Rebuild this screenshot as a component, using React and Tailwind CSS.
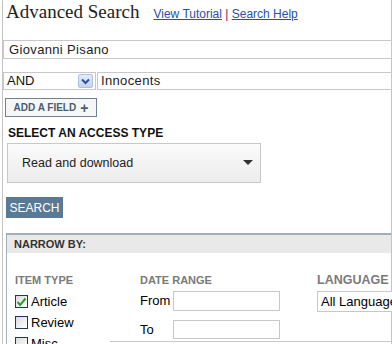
import React from 'react';

const ChevronDown = () => (
  <svg width="9" height="7" viewBox="0 0 9 7">
    <path d="M1 1.5 L4.5 5 L8 1.5" fill="none" stroke="#2b4f9c" strokeWidth="2" />
  </svg>
);

const Caret = () => (
  <svg width="10" height="6" viewBox="0 0 10 6">
    <path d="M0 0 H10 L5 5 Z" fill="#333" />
  </svg>
);

const Check = () => (
  <svg width="11" height="10" viewBox="0 0 11 10">
    <path d="M1.5 5 L4.2 8 L9.5 1.5" fill="none" stroke="#2aa02a" strokeWidth="2" />
  </svg>
);

const CheckBox = ({ checked, label }) => (
  <div className="flex items-center h-[21px]">
    <div className="w-[13px] h-[13px] shrink-0 border border-[#1c3a5a] bg-gradient-to-br from-[#dcdcdc] to-white flex items-center justify-center">
      {checked && <Check />}
    </div>
    <span className="ml-[3px] text-[13px] text-black leading-none">{label}</span>
  </div>
);

const App = () => {
  return (
    <div className="w-[392px] h-[344px] overflow-hidden bg-white font-['Liberation_Sans',Arial,sans-serif]">
      <div className="ml-[2px] w-[390px] h-[344px] border-x border-[#c4c4c4]">
        {/* header */}
        <div className="h-[40px] flex items-baseline pl-[3px] pt-[2px]">
          <h1 className="font-['Liberation_Serif','Times_New_Roman',serif] text-[19px] text-[#222] leading-[19px]">
            Advanced Search
          </h1>
          <div className="ml-[14px] text-[12px] leading-none">
            <a href="#" className="text-[#2b4fa0] underline">View Tutorial</a>
            <span className="text-[#6a2a5a]"> | </span>
            <a href="#" className="text-[#2b4fa0] underline">Search Help</a>
          </div>
        </div>

        {/* first term */}
        <div className="w-[389px] h-[19px] border border-[#c8c8c8] flex items-center pl-[5px] text-[13px] tracking-[0.35px] text-[#222]">
          Giovanni Pisano
        </div>

        {/* second term */}
        <div className="mt-[13px] flex w-[389px] h-[18px]">
          <div className="w-[93px] h-[18px] border border-[#c8c8c8] flex items-center justify-between pl-[3px] pr-[2px] text-[13px] text-[#111]">
            <span>AND</span>
            <div className="w-[15px] h-[14px] rounded-[2px] border border-[#aac0e4] bg-gradient-to-b from-[#e4ecfa] to-[#c4d4f0] flex items-center justify-center">
              <ChevronDown />
            </div>
          </div>
          <div className="ml-[1px] flex-1 h-[18px] border border-[#c8c8c8] flex items-center pl-[3px] text-[13px] tracking-[0.35px] text-[#222]">
            Innocents
          </div>
        </div>

        {/* add a field */}
        <button className="mt-[8px] ml-[2px] w-[92px] h-[19px] border border-[#6f8294] bg-[#f4f6f8] flex items-center justify-center gap-[4px] text-[10px] font-bold text-[#4c5d6e]">
          ADD A FIELD <span className="text-[14px] leading-none">+</span>
        </button>

        {/* access type */}
        <div className="mt-[10px] ml-[5px] text-[12px] font-bold text-[#111] leading-[12px]">
          SELECT AN ACCESS TYPE
        </div>
        <div className="mt-[4px] ml-[4px] w-[254px] h-[40px] border border-[#c8c8c8] bg-gradient-to-b from-[#fbfbfb] to-[#ececec] flex items-center justify-between pl-[14px] pr-[7px] text-[12.5px] text-[#222]">
          <span>Read and download</span>
          <Caret />
        </div>

        <button className="mt-[14px] ml-[3px] w-[57px] h-[21px] bg-[#5a7995] text-white text-[12px] flex items-center justify-center">
          SEARCH
        </button>

        {/* narrow by */}
        <div className="mt-[15px] ml-[3px] border-l border-t-2 border-[#a4aeb8]">
          <div className="h-[18px] bg-[#e9e9e9] flex items-center pl-[7px] text-[11px] font-bold text-[#333]">
            NARROW BY:
          </div>
          <div className="flex pt-[21px] pl-[8px]">
            <div className="w-[95px] shrink-0">
              <div className="text-[11px] font-bold text-[#7a7a7a] leading-[12px] mb-[5px]">ITEM TYPE</div>
              <CheckBox checked label="Article" />
              <CheckBox label="Review" />
              <CheckBox label="Misc" />
            </div>
            <div className="flex-1 min-w-0 border-b border-[#c8c8c8] h-[68px] pl-[30px] flex">
              <div className="w-[177px] shrink-0">
                <div className="text-[11px] font-bold text-[#7a7a7a] leading-[12px] mb-[5px] whitespace-nowrap">DATE RANGE</div>
                <div className="flex items-center h-[20px]">
                  <span className="w-[33px] text-[13px] text-black">From</span>
                  <div className="w-[107px] h-[20px] border border-[#c8c8c8]" />
                </div>
                <div className="flex items-center h-[19px] mt-[9px]">
                  <span className="w-[33px] text-[13px] text-black">To</span>
                  <div className="w-[107px] h-[19px] border border-[#c8c8c8]" />
                </div>
              </div>
              <div className="min-w-0">
                <div className="text-[12.5px] font-bold text-[#7a7a7a] leading-[12px] mb-[5px] whitespace-nowrap">LANGUAGE</div>
                <div className="w-[90px] h-[21px] bg-white border border-[#c8c8c8] flex items-center pl-[3px] text-[13px] text-black whitespace-nowrap">
                  All Languages
                </div>
              </div>
            </div>
          </div>
        </div>
      </div>
    </div>
  );
};

export default App;
